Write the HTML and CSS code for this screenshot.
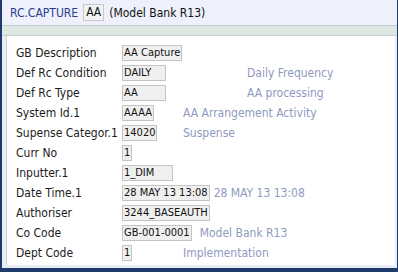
FILE: index.html
```html
<!DOCTYPE html>
<html>
<head>
<meta charset="utf-8">
<link rel="stylesheet" href="styles.css">
</head>
<body>
<div class="frame">
  <div class="header">
    <span class="title">RC.CAPTURE</span>
    <span class="idbox">AA</span>
    <span class="sub">(Model Bank R13)</span>
  </div>
  <div class="band"></div>
  <div class="panel">
    <div class="row"><span class="label">GB Description</span><span class="val"><span class="box">AA Capture</span></span></div>
    <div class="row"><span class="label">Def Rc Condition</span><span class="val"><span class="box w44">DAILY</span></span><span class="desc far">Daily Frequency</span></div>
    <div class="row"><span class="label">Def Rc Type</span><span class="val"><span class="box w44">AA</span></span><span class="desc far">AA processing</span></div>
    <div class="row"><span class="label">System Id.1</span><span class="val"><span class="box">AAAA</span></span><span class="desc">AA Arrangement Activity</span></div>
    <div class="row"><span class="label">Supense Categor.1</span><span class="val"><span class="box">14020</span></span><span class="desc">Suspense</span></div>
    <div class="row"><span class="label">Curr No</span><span class="val"><span class="box">1</span></span></div>
    <div class="row"><span class="label">Inputter.1</span><span class="val"><span class="box w51">1_DIM</span></span></div>
    <div class="row"><span class="label">Date Time.1</span><span class="val"><span class="box">28 MAY 13 13:08</span></span><span class="desc near">28 MAY 13 13:08</span></div>
    <div class="row"><span class="label">Authoriser</span><span class="val"><span class="box">3244_BASEAUTH</span></span></div>
    <div class="row"><span class="label">Co Code</span><span class="val"><span class="box">GB-001-0001</span></span><span class="desc mid">Model Bank R13</span></div>
    <div class="row"><span class="label">Dept Code</span><span class="val"><span class="box">1</span></span><span class="desc">Implementation</span></div>
  </div>
</div>
</body>
</html>
```
FILE: styles.css
```css
html, body {
  margin: 0;
  padding: 0;
  background: #1f3b6b;
}
body {
  width: 398px;
  height: 272px;
  overflow: hidden;
  font-family: "DejaVu Sans Condensed", "DejaVu Sans", sans-serif;
}
.frame {
  box-sizing: border-box;
  width: 395px;
  height: 268px;
  margin-left: 2px;
  background: #e9eef6;
  display: flex;
  flex-direction: column;
}
.header {
  height: 25px;
  background: #eef0fc;
  display: flex;
  align-items: center;
  padding-left: 8px;
  box-sizing: border-box;
  font-size: 12px;
}
.title {
  color: #2b3c8c;
}
.idbox {
  margin-left: 5px;
  background: #f2f2f2;
  border: 1px solid #c9c9c9;
  color: #111;
  padding: 0 2px;
  font-size: 12px;
  line-height: 15px;
}
.sub {
  margin-left: 5px;
  color: #111;
}
.band {
  height: 9px;
  background: #dfe7e3;
  border-top: 1px solid #c7cdcc;
  border-bottom: 1px solid #c7cdcc;
}
.panel {
  flex: 1;
  margin: 0 2px 3px 4px;
  background: #ffffff;
  border-left: 1px solid #cfd3d8;
  padding: 7px 0 0 9px;
  display: flex;
  flex-direction: column;
}
.row {
  height: 20px;
  display: flex;
  align-items: center;
  font-size: 12px;
}
.label {
  width: 106px;
  color: #1b1b1b;
}
.val {
  min-width: 61px;
  display: flex;
}
.box {
  box-sizing: border-box;
  height: 16px;
  line-height: 14px;
  padding: 0 1px;
  background: #efefef;
  border: 1px solid #c4c4c4;
  color: #111;
  font-size: 11px;
  white-space: nowrap;
}
.w44 { width: 44px; }
.w51 { width: 51px; }
.desc {
  color: #8e9ac0;
  white-space: nowrap;
}
.far { margin-left: 64px; }
.near { margin-left: 4px; }
.mid { margin-left: 8px; }
```
